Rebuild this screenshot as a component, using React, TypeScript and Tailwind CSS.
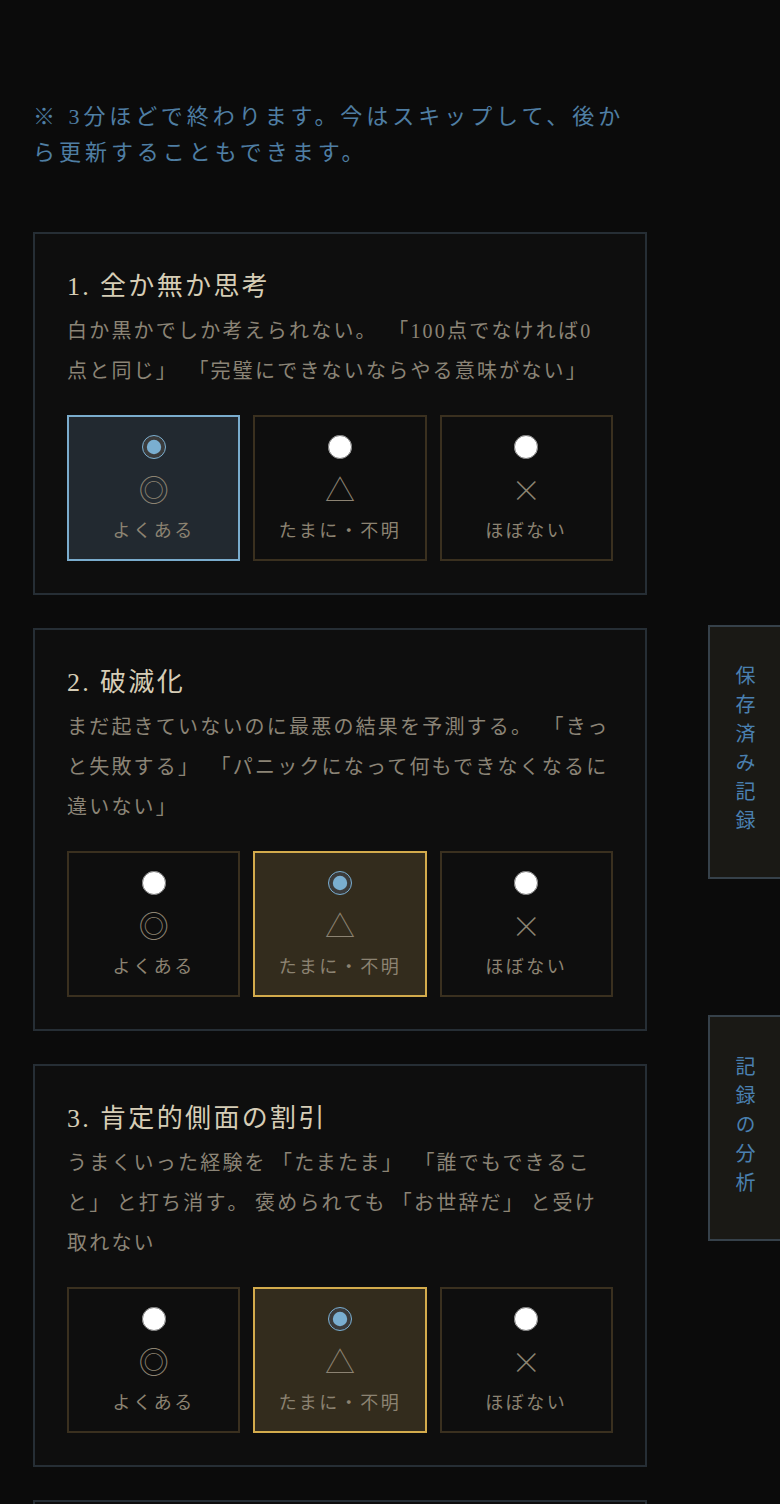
import { useState } from "react";

type Item = {
  id: number;
  title: string;
  desc: string;
};

const items: Item[] = [
  {
    id: 1,
    title: "全か無か思考",
    desc: "白か黒かでしか考えられない。「100点でなければ0点と同じ」「完璧にできないならやる意味がない」",
  },
  {
    id: 2,
    title: "破滅化",
    desc: "まだ起きていないのに最悪の結果を予測する。「きっと失敗する」「パニックになって何もできなくなるに違いない」",
  },
  {
    id: 3,
    title: "肯定的側面の割引",
    desc: "うまくいった経験を「たまたま」「誰でもできること」と打ち消す。褒められても「お世辞だ」と受け取れない",
  },
  {
    id: 4,
    title: "心の読みすぎ",
    desc: "根拠がないのに相手の気持ちを決めつける。",
  },
];

const options = [
  { key: "often", mark: "◎", label: "よくある" },
  { key: "sometimes", mark: "△", label: "たまに・不明" },
  { key: "rarely", mark: "×", label: "ほぼない" },
];

const font = "font-['Liberation_Serif','Noto_Sans_CJK_JP',serif]";

// 句読点と括弧は少し広めに取る
function Desc({ text }: { text: string }) {
  const parts = text.split(/([「」。、])/).filter(Boolean);
  return (
    <>
      {parts.map((p, i) => {
        if (p === "「") {
          return (
            <span key={i} className="ml-[0.26em]">
              {p}
            </span>
          );
        }
        if (/^[」。、]$/.test(p)) {
          return (
            <span key={i} className="tracking-[0.37em]">
              {p}
            </span>
          );
        }
        return <span key={i}>{p}</span>;
      })}
    </>
  );
}

export default function App() {
  const [answers, setAnswers] = useState<Record<number, string>>({
    1: "often",
    2: "sometimes",
    3: "sometimes",
  });

  return (
    <div className={`relative h-[1504px] overflow-hidden bg-[#0b0b0b] ${font} [text-spacing-trim:space-all]`}>
      <main className="pl-[33px] pr-[133px] pt-[99px]">
        {/* note */}
        <p className="text-[22px] leading-[36px] tracking-[0.18em] text-[#4f7ea3]">
          ※ 3分ほどで終わります。今はスキップして、後から更新することもできます。
        </p>

        <div className="mt-[61px] flex flex-col gap-[33px]">
          {items.map((item) => (
            <section
              key={item.id}
              className="border-2 border-[#262e35] bg-[#0e0e0e] px-[32px] pt-[34px] pb-[32px]"
            >
              <h3 className="text-[26px] leading-[38px] tracking-[0.09em] text-[#d6cdb6]">
                {item.id}. {item.title}
              </h3>
              <p className="mt-[5px] text-[20px] leading-[40px] tracking-[0.11em] text-[#8b8476]">
                <Desc text={item.desc} />
              </p>

              <div className="mt-[24px] grid grid-cols-3 gap-[13px]">
                {options.map((opt) => {
                  const checked = answers[item.id] === opt.key;
                  const tone =
                    checked && opt.key === "often"
                      ? "border-[#7aaccd] bg-[#222930]"
                      : checked
                        ? "border-[#d3ab4c] bg-[#332c1d]"
                        : "border-[#3a301f] bg-[#0e0e0e]";
                  return (
                    <label
                      key={opt.key}
                      className={`flex h-[146px] cursor-pointer flex-col items-center border-2 pt-[18px] ${tone}`}
                    >
                      <input
                        type="radio"
                        name={`q${item.id}`}
                        checked={checked}
                        onChange={() =>
                          setAnswers((a) => ({ ...a, [item.id]: opt.key }))
                        }
                        className="m-0 h-6 w-6 accent-[#7aaed0]"
                      />
                      <span className="mt-[13px] h-[32px] font-['Noto_Sans_CJK_JP',sans-serif] text-[30px] font-light leading-[32px] text-[#8c8372]">
                        {opt.mark}
                      </span>
                      <span className="mt-[13px] text-[18px] leading-[28px] tracking-[0.14em] text-[#8c8372]">
                        {opt.label}
                      </span>
                    </label>
                  );
                })}
              </div>
            </section>
          ))}
        </div>
      </main>

      {/* side tabs */}
      <button className="absolute left-[708px] top-[625px] flex h-[254px] w-[90px] items-center justify-center border-2 border-[#36414a] bg-[#1a1915] pr-[18px]">
        <span className="text-[20px] leading-[20px] tracking-[0.45em] text-[#4a80b0] [writing-mode:vertical-rl]">
          保存済み記録
        </span>
      </button>
      <button className="absolute left-[708px] top-[1015px] flex h-[226px] w-[90px] items-center justify-center border-2 border-[#36414a] bg-[#1a1915] pr-[18px]">
        <span className="text-[20px] leading-[20px] tracking-[0.45em] text-[#4a80b0] [writing-mode:vertical-rl]">
          記録の分析
        </span>
      </button>
    </div>
  );
}
